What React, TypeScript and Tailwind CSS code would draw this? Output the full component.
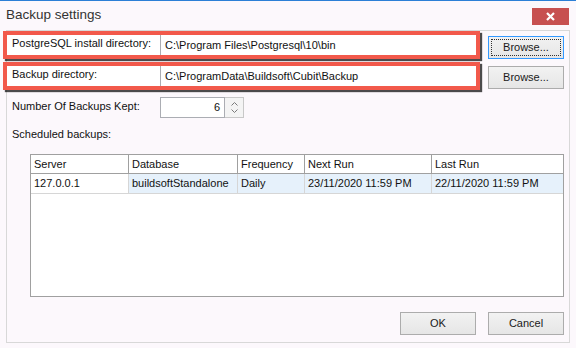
import React from "react";

const cols = [
  { name: "Server", value: "127.0.0.1", hl: false },
  { name: "Database", value: "buildsoftStandalone", hl: true },
  { name: "Frequency", value: "Daily", hl: true },
  { name: "Next Run", value: "23/11/2020 11:59 PM", hl: true },
  { name: "Last Run", value: "22/11/2020 11:59 PM", hl: true },
];

function Button({ label, focused }: { label: string; focused?: boolean }) {
  return (
    <button
      type="button"
      className={
        "flex h-[23px] w-[76px] items-center justify-center border bg-gradient-to-b from-[#f2f2f2] to-[#e6e6e6] text-[11px] text-[#1a1a1a] " +
        (focused ? "border-[#3399ff]" : "border-[#acacac]")
      }
    >
      {focused ? (
        <span className="flex h-[17px] w-[70px] items-center justify-center border border-dotted border-[#333]">
          {label}
        </span>
      ) : (
        label
      )}
    </button>
  );
}

function PathRow({ label, value }: { label: string; value: string }) {
  return (
    <div className="-ml-[4px] flex h-[28px] w-[477px] border-[4px] border-[#f2594b] bg-white shadow-[2px_2px_1px_rgba(0,0,0,0.7)]">
      <div className="w-[153px] pl-[5px] pt-[2px] text-[11px] leading-[13px]">{label}</div>
      <div className="flex flex-1 items-center border-l border-[#abadb3] pl-[4px] text-[11px]">{value}</div>
    </div>
  );
}

export default function App() {
  return (
    <div
      className="h-[348px] w-[576px] overflow-hidden border-t border-[#2b7fd6] bg-[#fcf8fc] text-[#111]"
      style={{ fontFamily: '"Liberation Sans", Arial, sans-serif' }}
    >
      {/* title bar */}
      <div className="flex h-[29px] items-start justify-between">
        <div className="ml-[6px] mt-[5px] text-[13.5px] leading-[18px] text-[#333]">Backup settings</div>
        <div className="mr-[7px] mt-[7px] flex h-[17px] w-[37px] items-center justify-center bg-[#c75050]">
          <svg width="9" height="9" viewBox="0 0 9 9" aria-hidden="true">
            <path d="M1 1l7 7M8 1L1 8" stroke="white" strokeWidth="2.2" />
          </svg>
        </div>
      </div>

      {/* body panel */}
      <div className="mx-[6px] flex h-[313px] flex-col border border-[#d8d8d8] pr-[5px]">
        <div className="mt-[0px] flex items-start">
          <PathRow label="PostgreSQL install directory:" value="C:\Program Files\Postgresql\10\bin" />
          <div className="ml-[8px] mt-[5px]">
            <Button label="Browse..." focused />
          </div>
        </div>

        <div className="mt-[3px] flex items-start">
          <PathRow label="Backup directory:" value="C:\ProgramData\Buildsoft\Cubit\Backup" />
          <div className="ml-[8px] mt-[4px]">
            <Button label="Browse..." />
          </div>
        </div>

        <div className="mt-[7px] flex items-start pl-[5px]">
          <div className="w-[148px] pt-[3px] text-[11px] leading-[13px]">Number Of Backups Kept:</div>
          <div className="flex h-[21px]">
            <div className="flex w-[65px] items-center justify-end border border-[#abadb3] bg-white pr-[4px] text-[11px]">6</div>
            <div className="flex w-[19px] flex-col items-center justify-center gap-[3px] border border-l-0 border-[#c8c8c8] bg-[#f4f4f4]">
              <svg width="7" height="4" viewBox="0 0 7 4" aria-hidden="true">
                <path d="M0.5 3.5L3.5 0.5L6.5 3.5" fill="none" stroke="#7a7a7a" strokeWidth="1" />
              </svg>
              <svg width="7" height="4" viewBox="0 0 7 4" aria-hidden="true">
                <path d="M0.5 0.5L3.5 3.5L6.5 0.5" fill="none" stroke="#7a7a7a" strokeWidth="1" />
              </svg>
            </div>
          </div>
        </div>

        <div className="mt-[10px] pl-[5px] text-[11px] leading-[13px]">Scheduled backups:</div>

        {/* grid */}
        <div className="ml-[23px] mt-[13px] h-[143px] w-[534px] border border-[#a0a0a0] bg-white text-[11px]">
          <div className="grid h-[19px] grid-cols-[98px_109px_67px_127px_1fr] border-b border-[#a0a0a0]">
            {cols.map((c, i) => (
              <div
                key={c.name}
                className={"flex items-center pl-[3px] " + (i < cols.length - 1 ? "border-r border-[#a0a0a0]" : "")}
              >
                {c.name}
              </div>
            ))}
          </div>
          <div className="grid h-[20px] grid-cols-[98px_109px_67px_127px_1fr] border-b border-[#d6d6d6]">
            {cols.map((c, i) => (
              <div
                key={c.name}
                className={
                  "flex items-center pl-[3px] " +
                  (c.hl ? "bg-[#e6f1fb] " : "bg-white ") +
                  (i < cols.length - 1 ? "border-r border-[#d6d6d6]" : "")
                }
              >
                {c.value}
              </div>
            ))}
          </div>
        </div>

        <div className="mt-[15px] flex justify-end gap-[12px]">
          <Button label="OK" />
          <Button label="Cancel" />
        </div>
      </div>
    </div>
  );
}
